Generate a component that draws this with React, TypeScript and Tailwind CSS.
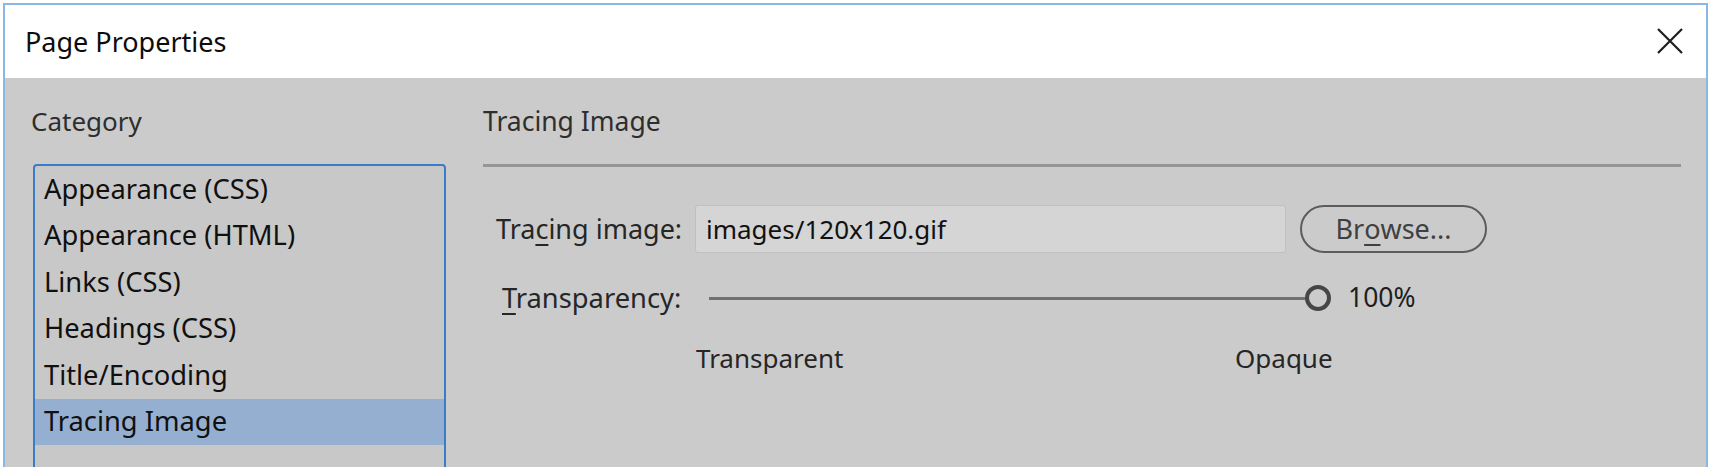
import React from "react";

const items = [
  "Appearance (CSS)",
  "Appearance (HTML)",
  "Links (CSS)",
  "Headings (CSS)",
  "Title/Encoding",
  "Tracing Image",
];

export default function App() {
  return (
    <div className="w-[1711px] h-[467px] bg-white overflow-hidden pt-[3px] pl-[3px] font-['Noto_Sans',sans-serif]">
      <div className="w-[1705px] h-[480px] border-2 border-[#8ab8e6] flex flex-col">
        <div className="h-[73px] shrink-0 bg-white flex items-center justify-between pl-[20px] pr-[23px]">
          <span className="text-[27px] leading-none text-[#0d0d0d]">Page Properties</span>
          <svg width="26" height="26" viewBox="0 0 26 26" className="mt-[-2px]">
            <path d="M1 1 L25 25 M25 1 L1 25" stroke="#1e1e1e" strokeWidth="2.2" fill="none" />
          </svg>
        </div>
        <div className="flex-1 bg-[#cbcbcb] flex pl-[28px] pr-[25px] pt-[26px]">
          <div className="w-[413px] shrink-0 flex flex-col">
            <div className="h-[34px] leading-[34px] text-[26px] text-[#2e2e2e] -ml-[2px]">Category</div>
            <div className="mt-[26px] h-[320px] border-2 border-[#3b7cc7] rounded-[4px] bg-[#c8c8c8] flex flex-col">
              {items.map((it, i) => (
                <div
                  key={it}
                  className={
                    i === 5
                      ? "h-[46.5px] flex items-center pl-[9px] text-[27.3px] text-[#101010] bg-[#95afd0]"
                      : "h-[46.5px] flex items-center pl-[9px] text-[27.3px] text-[#101010]"
                  }
                >
                  {it}
                </div>
              ))}
            </div>
          </div>
          <div className="flex-1 ml-[37px] flex flex-col">
            <div className="h-[34px] leading-[34px] text-[26.5px] text-[#2e2e2e]">Tracing Image</div>
            <div className="mt-[26px] h-[3px] bg-[#969696]" />
            <div className="mt-[38px] h-[48px] flex items-center">
              <div className="w-[212px] pl-[13px] text-[27px] text-[#262626]">
                Tra<span className="underline underline-offset-[5px]">c</span>ing image:
              </div>
              <div className="w-[591px] h-[48px] bg-[#d5d5d5] border border-[#c0c0c0] rounded-[3px] flex items-center pl-[10px] text-[26px] text-[#111111]">
                images/120x120.gif
              </div>
              <div className="ml-[14px] w-[187px] h-[48px] border-2 border-[#5c5c5c] rounded-full flex items-center justify-center text-[27px] text-[#404040]">
                Br<span className="underline underline-offset-[5px]">o</span>wse...
              </div>
            </div>
            <div className="mt-[25px] h-[40px] flex items-center">
              <div className="w-[226px] pl-[19px] text-[27.3px] text-[#262626]">
                <span className="underline underline-offset-[5px]">T</span>ransparency:
              </div>
              <div className="w-[596px] h-[3px] bg-[#707070]" />
              <div className="w-[26px] h-[26px] rounded-full border-4 border-[#454545] bg-[#cbcbcb]" />
              <div className="ml-[17px] text-[26.5px] text-[#1e1e1e]">100%</div>
            </div>
            <div className="mt-[20px] h-[40px] flex items-center pl-[213px]">
              <div className="w-[539px] text-[26px] text-[#262626]">Transparent</div>
              <div className="text-[26px] text-[#262626]">Opaque</div>
            </div>
          </div>
        </div>
      </div>
    </div>
  );
}
